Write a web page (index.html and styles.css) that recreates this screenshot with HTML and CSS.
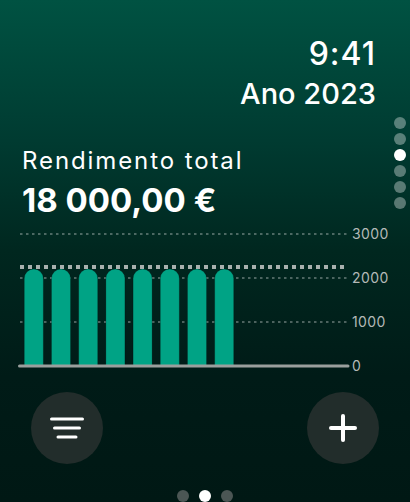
FILE: index.html
```html
<!DOCTYPE html>
<html lang="pt">
<head>
    <meta charset="UTF-8">
    <meta name="viewport" content="width=device-width, initial-scale=1.0">
    <title>Rendimento</title>
    <link rel="stylesheet" href="styles.css">
</head>
<body>

<div class="screen">

    <div class="header">
        <div class="time">9:41</div>
        <div class="year">Ano 2023</div>
    </div>

    <div class="side-dots">
        <span class="dot"></span>
        <span class="dot"></span>
        <span class="dot active"></span>
        <span class="dot"></span>
        <span class="dot"></span>
        <span class="dot"></span>
    </div>

    <div class="summary">
        <div class="summary-label">Rendimento total</div>
        <div class="summary-value">18 000,00 €</div>
    </div>

    <div class="chart">
        <svg class="plot" width="332" height="148" viewBox="0 0 332 148">
            <g class="grid">
                <line x1="2" y1="8" x2="329" y2="8"/>
                <line x1="2" y1="52" x2="329" y2="52"/>
                <line x1="2" y1="96" x2="329" y2="96"/>
            </g>
            <g class="bars">
                <path d="M6.3 140 V52.5 a9.5 9.5 0 0 1 19 0 V140 Z"/>
                <path d="M33.5 140 V52.5 a9.5 9.5 0 0 1 19 0 V140 Z"/>
                <path d="M60.7 140 V52.5 a9.5 9.5 0 0 1 19 0 V140 Z"/>
                <path d="M87.9 140 V52.5 a9.5 9.5 0 0 1 19 0 V140 Z"/>
                <path d="M115.1 140 V52.5 a9.5 9.5 0 0 1 19 0 V140 Z"/>
                <path d="M142.3 140 V52.5 a9.5 9.5 0 0 1 19 0 V140 Z"/>
                <path d="M169.5 140 V52.5 a9.5 9.5 0 0 1 19 0 V140 Z"/>
                <path d="M196.7 140 V52.5 a9.5 9.5 0 0 1 19 0 V140 Z"/>
            </g>
            <line class="baseline" x1="1.5" y1="140" x2="330" y2="140"/>
            <line class="average" x1="2" y1="41" x2="330" y2="41"/>
        </svg>
        <div class="axis">
            <span>3000</span>
            <span>2000</span>
            <span>1000</span>
            <span>0</span>
        </div>
    </div>

    <div class="actions">
        <button class="round-btn" aria-label="Filtrar">
            <svg width="34" height="24" viewBox="0 0 34 24">
                <g stroke="#fff" stroke-width="3" stroke-linecap="round">
                    <line x1="1.5" y1="3" x2="32.5" y2="3"/>
                    <line x1="4.5" y1="12" x2="29.5" y2="12"/>
                    <line x1="8" y1="21" x2="26" y2="21"/>
                </g>
            </svg>
        </button>
        <button class="round-btn" aria-label="Adicionar">
            <svg width="28" height="28" viewBox="0 0 28 28">
                <g stroke="#fff" stroke-width="4" stroke-linecap="round">
                    <line x1="2" y1="14" x2="26" y2="14"/>
                    <line x1="14" y1="2" x2="14" y2="26"/>
                </g>
            </svg>
        </button>
    </div>

    <div class="pager">
        <span class="dot"></span>
        <span class="dot active"></span>
        <span class="dot"></span>
    </div>

</div>

</body>
</html>
```

FILE: styles.css
```css
body {
    margin: 0px;
    background: #001814;
}

.screen {
    position: relative;
    width: 410px;
    height: 502px;
    overflow: hidden;
    background: linear-gradient(180deg, #005242 0%, #003b31 28%, #00271f 50%, #001b17 75%, #001814 100%);
    color: white;
    font-family: Inter, "Noto Sans", sans-serif;
}

.header {
    padding: 36px 34px 0 0;
    text-align: right;
}

.time {
    font-size: 32px;
    line-height: 36px;
    font-weight: 500;
    letter-spacing: 1px;
}

.year {
    margin-top: 4px;
    font-size: 29px;
    line-height: 36px;
    font-weight: 500;
}

.side-dots {
    position: absolute;
    top: 117px;
    right: 4px;
    display: flex;
    flex-direction: column;
    gap: 4px;
}

.side-dots .dot {
    width: 12px;
    height: 12px;
    border-radius: 50%;
    background: rgba(255, 255, 255, 0.35);
}

.side-dots .dot.active {
    background: white;
}

.summary {
    padding: 35px 0 0 22px;
}

.summary-label {
    font-size: 24px;
    line-height: 28px;
    letter-spacing: 1.9px;
}

.summary-value {
    margin-top: 7px;
    font-size: 33px;
    line-height: 36px;
    font-weight: 700;
}

.chart {
    display: flex;
    gap: 2px;
    margin: 8px 0 0 18px;
}

.plot {
    display: block;
}

.grid line {
    stroke: rgba(255, 255, 255, 0.4);
    stroke-width: 1.5;
    stroke-dasharray: 2.5 3.5;
}

.bars path {
    fill: #00a385;
    stroke: rgba(0, 0, 0, 0.18);
    stroke-width: 1;
}

.baseline {
    stroke: #9a9f9d;
    stroke-width: 3;
    stroke-linecap: round;
}

.average {
    stroke: #a9b0ae;
    stroke-width: 4;
    stroke-dasharray: 4 4;
}

.axis {
    display: flex;
    flex-direction: column;
    justify-content: space-between;
    height: 148px;
    font-size: 14px;
    line-height: 16px;
    letter-spacing: 0.4px;
    color: #b4b9b7;
}

.actions {
    display: flex;
    justify-content: space-between;
    padding: 0 31px;
    margin-top: 18px;
}

.round-btn {
    display: flex;
    align-items: center;
    justify-content: center;
    width: 72px;
    height: 72px;
    padding: 0;
    border: none;
    border-radius: 50%;
    background: #222d2b;
}

.pager {
    display: flex;
    justify-content: center;
    gap: 10px;
    margin-top: 26px;
}

.pager .dot {
    width: 12px;
    height: 12px;
    border-radius: 50%;
    background: #4b5654;
}

.pager .dot.active {
    background: white;
}
```
